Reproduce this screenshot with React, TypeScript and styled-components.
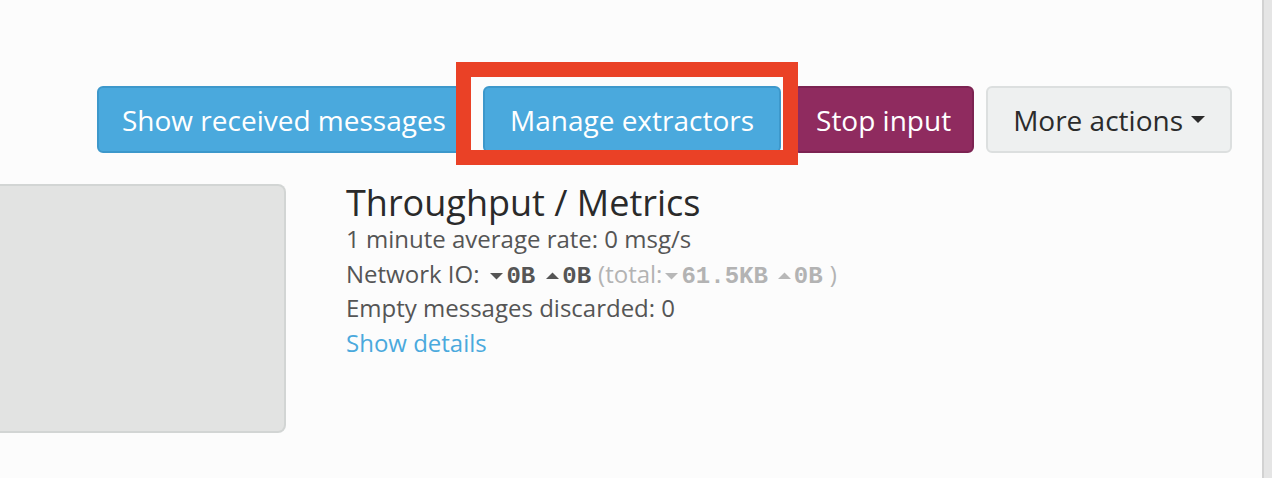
import React from "react";
import styled, { createGlobalStyle } from "styled-components";

const Global = createGlobalStyle`
  html, body { margin: 0; padding: 0; background: #fcfcfc; }
  body { font-family: "Open Sans", "Noto Sans", sans-serif; }
`;

const Page = styled.div`
  display: flex;
  width: 1272px;
  height: 478px;
  overflow: hidden;
`;

const Content = styled.div`
  flex: 1;
  display: flex;
  flex-direction: column;
  padding-top: 86px;
  min-width: 0;
`;

const ScrollTrack = styled.div`
  width: 8px;
  background: #e5e5e5;
  border-left: 2px solid #d2d2d2;
`;

const Toolbar = styled.div`
  display: flex;
  justify-content: flex-end;
  align-items: center;
  gap: 12px;
  padding-right: 30px;
`;

type Variant = "info" | "danger" | "default";

const palette: Record<Variant, { bg: string; border: string; color: string }> = {
  info: { bg: "#4aa9dd", border: "#3d98cb", color: "#ffffff" },
  danger: { bg: "#8f2b5f", border: "#7c2352", color: "#ffffff" },
  default: { bg: "#eef0f0", border: "#dcdfdf", color: "#2b2b2b" },
};

const Button = styled.button<{ $variant: Variant; $pad?: number }>`
  height: 67px;
  box-sizing: border-box;
  padding: 0 ${(p) => p.$pad ?? 25}px;
  border-radius: 6px;
  border: 2px solid ${(p) => palette[p.$variant].border};
  background: ${(p) => palette[p.$variant].bg};
  color: ${(p) => palette[p.$variant].color};
  font-family: "Open Sans", "Noto Sans", sans-serif;
  font-size: 28px;
  line-height: 1;
  display: inline-flex;
  align-items: center;
  gap: 6px;
  white-space: nowrap;
  cursor: pointer;
`;

const Highlight = styled.div`
  position: relative;
  display: flex;
  &::after {
    content: "";
    position: absolute;
    left: -27px;
    right: -17px;
    top: -24px;
    bottom: -12px;
    border: 15px solid #ea4126;
    pointer-events: none;
    z-index: 2;
  }
`;

const Caret = styled.span`
  display: inline-block;
  width: 0;
  height: 0;
  border-left: 7px solid transparent;
  border-right: 7px solid transparent;
  border-top: 7px solid #2b2b2b;
  margin-left: 2px;
`;

const Row = styled.div`
  display: flex;
  align-items: flex-start;
  margin-top: 31px;
  gap: 60px;
`;

const Placeholder = styled.div`
  width: 286px;
  height: 249px;
  box-sizing: border-box;
  background: #e2e3e2;
  border: 2px solid #d2d5d4;
  border-left: none;
  border-radius: 0 8px 8px 0;
`;

const Metrics = styled.div`
  display: flex;
  flex-direction: column;
  color: #555555;
  font-size: 24px;
  line-height: 34.5px;
`;

const Title = styled.h2`
  margin: 1px 0 0 0;
  font-weight: 400;
  font-size: 36px;
  line-height: 36px;
  color: #2a2a2a;
`;

const Line = styled.div`
  height: 34.5px;
  white-space: nowrap;
  &:first-of-type {
    margin-top: 1px;
  }
`;

const Mono = styled.span<{ $muted?: boolean }>`
  font-family: "Liberation Mono", "Courier New", monospace;
  font-weight: 700;
  font-size: 24px;
  color: ${(p) => (p.$muted ? "#b3b3b3" : "#555555")};
`;

const Muted = styled.span`
  color: #b3b3b3;
`;

const Arrow = styled.svg<{ $muted?: boolean; $ml: number }>`
  width: 13px;
  height: 8px;
  margin: 0 3px 0 ${(p) => p.$ml}px;
  fill: ${(p) => (p.$muted ? "#b8b8b8" : "#555555")};
  vertical-align: 3px;
`;

const Link = styled.a`
  color: #4aa9dd;
  text-decoration: none;
  cursor: pointer;
`;

type ArrowProps = { muted?: boolean; ml?: number };

const Down = ({ muted, ml = 0 }: ArrowProps) => (
  <Arrow $muted={muted} $ml={ml} viewBox="0 0 13 8">
    <path d="M0 1 L13 1 L6.5 7.5 Z" />
  </Arrow>
);
const Up = ({ muted, ml = 0 }: ArrowProps) => (
  <Arrow $muted={muted} $ml={ml} viewBox="0 0 13 8">
    <path d="M0 7 L13 7 L6.5 0.5 Z" />
  </Arrow>
);

const Paren = styled(Muted)<{ $ml: number }>`
  margin-left: ${(p) => p.$ml}px;
`;

export default function App() {
  return (
    <>
      <Global />
      <Page>
        <Content>
          <Toolbar>
            <Button $variant="info" $pad={23}>Show received messages</Button>
            <Highlight>
              <Button $variant="info">Manage extractors</Button>
            </Highlight>
            <Button $variant="danger" $pad={21}>Stop input</Button>
            <Button $variant="default" $pad={25}>
              More actions <Caret />
            </Button>
          </Toolbar>
          <Row>
            <Placeholder />
            <Metrics>
              <Title>Throughput / Metrics</Title>
              <Line>1 minute average rate: 0 msg/s</Line>
              <Line>
                Network IO:
                <Down ml={11} />
                <Mono>0B</Mono>
                <Up ml={11} />
                <Mono>0B</Mono>
                <Paren $ml={7}>(total:</Paren>
                <Down muted ml={3} />
                <Mono $muted>61.5KB</Mono>
                <Up muted ml={10} />
                <Mono $muted>0B</Mono>
                <Paren $ml={7}>)</Paren>
              </Line>
              <Line>Empty messages discarded: 0</Line>
              <Line>
                <Link>Show details</Link>
              </Line>
            </Metrics>
          </Row>
        </Content>
        <ScrollTrack />
      </Page>
    </>
  );
}
